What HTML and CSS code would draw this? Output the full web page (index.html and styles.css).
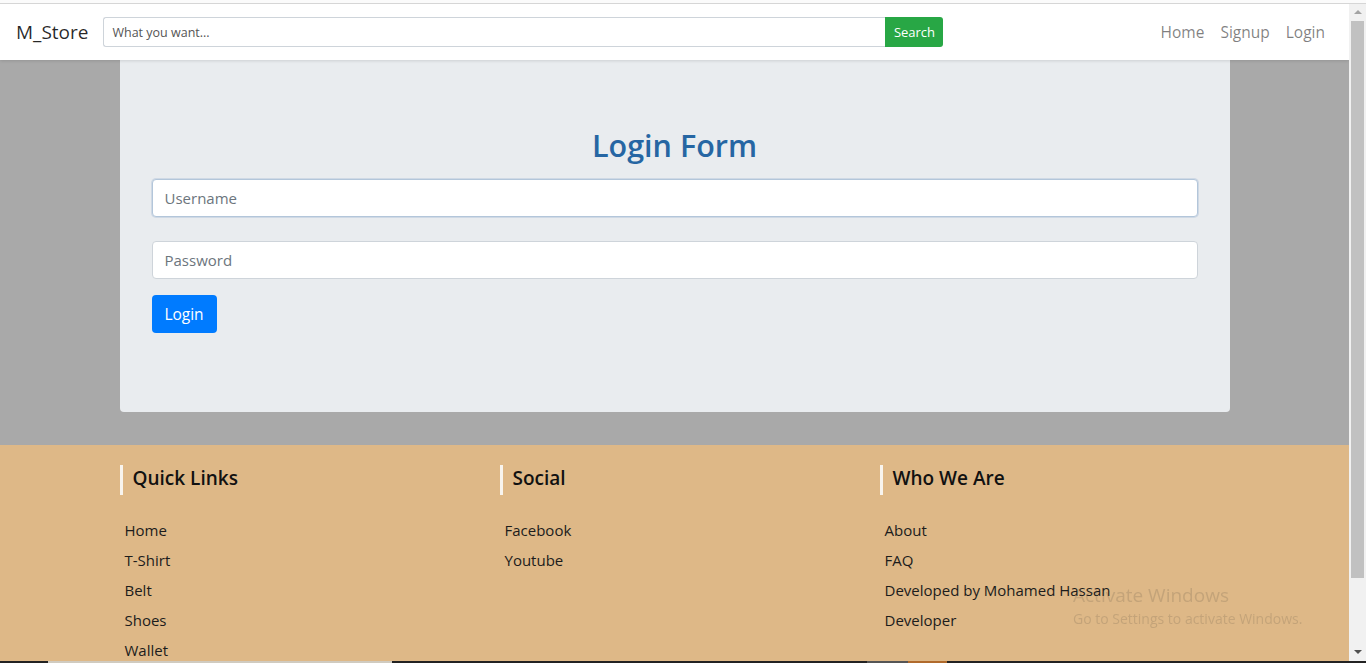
FILE: index.html
```html
<!DOCTYPE html>
<html lang="en">
<head>
<meta charset="utf-8">
<title>M_Store - Login</title>
<link rel="stylesheet" href="styles.css">
</head>
<body>
<div class="chrome-top"></div>
<div class="viewport">
  <div class="page">
    <nav class="navbar">
      <a class="brand" href="#">M_Store</a>
      <form class="search">
        <input class="search-input" type="text" placeholder="What you want...">
        <button class="search-btn" type="button">Search</button>
      </form>
      <ul class="nav">
        <li><a href="#">Home</a></li>
        <li><a href="#">Signup</a></li>
        <li><a href="#">Login</a></li>
      </ul>
    </nav>
    <main class="main">
      <div class="container">
        <section class="jumbo">
          <h2 class="title">Login Form</h2>
          <form class="login">
            <div class="group"><input class="field focused" type="text" placeholder="Username"></div>
            <div class="group"><input class="field" type="password" placeholder="Password"></div>
            <button class="btn-login" type="button">Login</button>
          </form>
        </section>
      </div>
    </main>
    <footer class="footer">
      <div class="container cols">
        <div class="col">
          <h4 class="col-title">Quick Links</h4>
          <ul class="links">
            <li>Home</li><li>T-Shirt</li><li>Belt</li><li>Shoes</li><li>Wallet</li>
          </ul>
        </div>
        <div class="col">
          <h4 class="col-title">Social</h4>
          <ul class="links">
            <li>Facebook</li><li>Youtube</li>
          </ul>
        </div>
        <div class="col">
          <h4 class="col-title">Who We Are</h4>
          <ul class="links">
            <li>About</li><li>FAQ</li><li>Developed by Mohamed Hassan</li><li>Developer</li>
          </ul>
        </div>
      </div>
    </footer>
  </div>
  <div class="scrollbar">
    <div class="arrow up"></div>
    <div class="track"><div class="thumb"></div></div>
    <div class="arrow down"></div>
  </div>
</div>
<div class="taskbar"><span class="tb-a"></span><span class="tb-b"></span><span class="tb-c"></span><span class="tb-e"></span><span class="tb-d"></span></div>
<div class="activate">
  <div class="act-1">Activate Windows</div>
  <div class="act-2">Go to Settings to activate Windows.</div>
</div>
</body>
</html>
```

FILE: styles.css
```css
* { box-sizing: border-box; }
html, body { margin: 0; padding: 0; height: 100%; overflow: hidden; }
body {
  font-family: "Open Sans", "Noto Sans", sans-serif;
  color: #212529;
  background: #fff;
  display: flex;
  flex-direction: column;
}
.chrome-top {
  height: 4px;
  background: #fbfbfb;
  border-bottom: 1px solid #d6d6d6;
  flex: none;
}
.viewport {
  display: flex;
  height: 657px;
  flex: none;
}
.page {
  flex: 1;
  overflow: hidden;
  min-width: 0;
}
/* navbar */
.navbar {
  height: 56px;
  display: flex;
  align-items: center;
  padding: 0 16px;
  background: #fff;
  position: relative;
  z-index: 2;
  box-shadow: 0 1px 3px rgba(0,0,0,0.12);
}
.brand {
  font-size: 19px;
  color: rgba(0,0,0,0.85);
  text-decoration: none;
  margin-right: 15px;
  line-height: 30px;
}
.search { display: flex; height: 30px; }
.search-input {
  width: 782px;
  height: 30px;
  border: 1px solid #ced4da;
  border-right: none;
  border-radius: 3px 0 0 3px;
  padding: 4px 8px;
  font-family: inherit;
  font-size: 12.5px;
  color: #495057;
}
.search-input::placeholder { color: #555; }
.search-btn {
  width: 58px;
  height: 30px;
  border: none;
  background: #28a745;
  color: #fff;
  font-family: inherit;
  font-size: 13px;
  border-radius: 0 3px 3px 0;
  padding: 0;
}
.nav {
  list-style: none;
  margin: 0 0 0 auto;
  padding: 0;
  display: flex;
}
.nav a {
  display: block;
  padding: 8px 8px;
  color: rgba(0,0,0,0.5);
  text-decoration: none;
  font-size: 15.5px;
}
/* main */
.main {
  background: #a9a9a9;
  padding-bottom: 33px;
}
.container {
  width: 1110px;
  margin: 0 auto;
}
.jumbo {
  background: #e9ecef;
  border-radius: 0 0 4px 4px;
  padding: 66px 32px 63px;
  height: 352px;
}
.title {
  margin: 0 0 15px;
  text-align: center;
  font-size: 30.5px;
  font-weight: 600;
  line-height: 38px;
  color: #2666a3;
}
.login { margin: 0; }
.group { margin-bottom: 24px; }
.field {
  display: block;
  width: 100%;
  height: 38px;
  padding: 6px 12px;
  border: 1px solid #ced4da;
  border-radius: 4px;
  background: #fff;
  font-family: inherit;
  font-size: 15px;
  color: #495057;
}
.field::placeholder { color: #6c757d; }
.field.focused {
  border-color: #b3c6da;
  box-shadow: 0 0 0 1px rgba(130,160,200,0.25);
}
.group:nth-child(2) { margin-bottom: 16px; }
.btn-login {
  height: 38px;
  width: 65px;
  padding: 0;
  border: none;
  border-radius: 4px;
  background: #007bff;
  color: #fff;
  font-family: inherit;
  font-size: 15.5px;
}
/* footer */
.footer {
  background: #deb887;
  padding-top: 20px;
  height: 300px;
}
.cols { display: flex; width: 1140px; }
.col { width: 380px; padding: 0 15px; }
.col-title {
  margin: 0;
  height: 30px;
  line-height: 27px;
  border-left: 3px solid #f8f4ee;
  padding-left: 10px;
  font-size: 19px;
  font-weight: 600;
  color: #111;
}
.links {
  list-style: none;
  margin: 20px 0 0;
  padding: 0 0 0 5px;
}
.links li {
  line-height: 30px;
  font-size: 15px;
  color: #1c1c1c;
}
/* scrollbar */
.scrollbar {
  width: 17px;
  flex: none;
  background: #f1f1f1;
  display: flex;
  flex-direction: column;
}
.arrow { height: 17px; position: relative; }
.arrow::after {
  content: "";
  position: absolute;
  left: 5px;
  top: 6px;
  border-left: 4px solid transparent;
  border-right: 4px solid transparent;
}
.arrow.up::after { border-bottom: 4px solid #a3a3a3; }
.arrow.down::after { border-top: 4px solid #505050; }
.track { flex: 1; padding: 0 2px; }
.thumb { height: 557px; background: #c1c1c1; }
/* taskbar */
.taskbar {
  height: 2px;
  flex: none;
  background: #222;
  display: flex;
}
.tb-a { width: 48px; }
.tb-b { width: 344px; background: #d0cbc0; }
.tb-c { width: 475px; }
.tb-e { width: 41px; background: #555; }
.tb-d { width: 39px; background: #b06a2c; }
/* windows watermark */
.activate {
  position: fixed;
  left: 1073px;
  top: 583px;
  color: rgba(80,70,60,0.18);
  pointer-events: none;
}
.act-1 { font-size: 19px; line-height: 24px; }
.act-2 { font-size: 14px; line-height: 20px; margin-top: 2px; }
```
